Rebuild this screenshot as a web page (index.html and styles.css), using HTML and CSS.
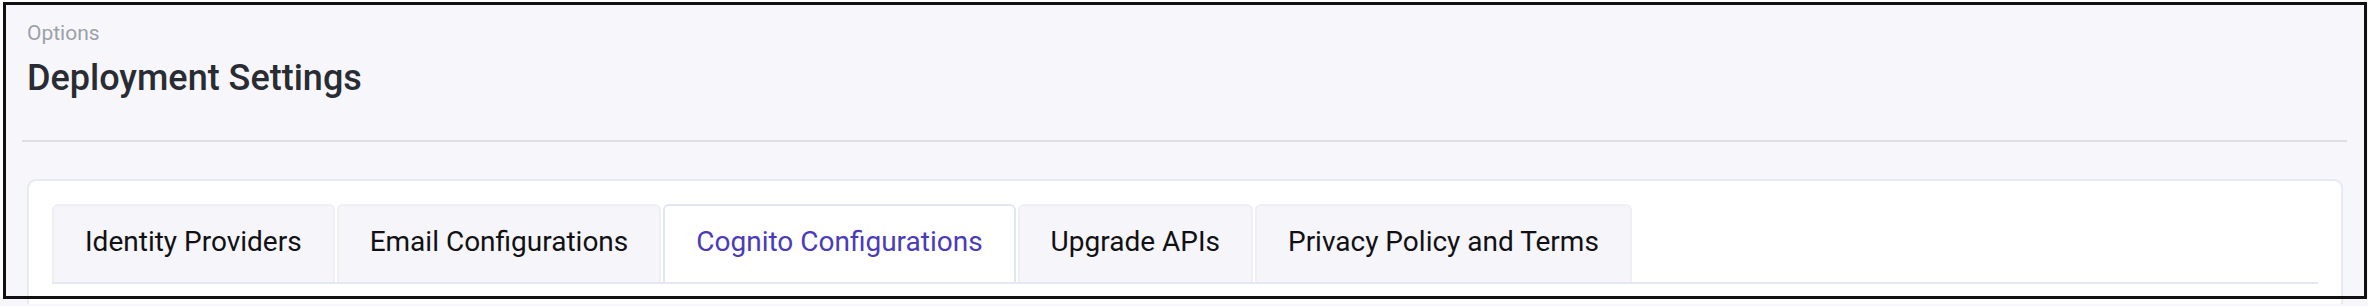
FILE: index.html
```html
<!DOCTYPE html>
<html lang="en">
<head>
<meta charset="utf-8">
<title>Deployment Settings</title>
<link rel="stylesheet" href="styles.css">
</head>
<body>
<div class="page">
  <header class="header">
    <div class="crumb">Options</div>
    <h1 class="title">Deployment Settings</h1>
  </header>
  <div class="divider"></div>
  <section class="card">
    <nav class="tabs">
      <div class="tab">Identity Providers</div>
      <div class="tab">Email Configurations</div>
      <div class="tab active">Cognito Configurations</div>
      <div class="tab">Upgrade APIs</div>
      <div class="tab">Privacy Policy and Terms</div>
    </nav>
  </section>
</div>
<div class="frame"></div>
</body>
</html>
```

FILE: styles.css
```css
html, body {
  margin: 0;
  padding: 0;
}
body {
  background: #f7f7fb;
  font-family: Roboto, "Liberation Sans", Arial, sans-serif;
  width: 2368px;
  height: 306px;
  overflow: hidden;
  position: relative;
}
.page {
  padding-top: 21px;
}
.header {
  padding: 0 27px;
}
.crumb {
  font-size: 21px;
  line-height: 24px;
  color: #9e9fa8;
}
.title {
  margin: 11px 0 0;
  font-size: 36px;
  line-height: 44px;
  font-weight: 500;
  color: #2a2c33;
}
.divider {
  margin: 40px 21px 0 22px;
  height: 2px;
  background: #dedee3;
}
.card {
  margin: 37px 25px 0 27px;
  background: #ffffff;
  border: 2px solid #e6eaf3;
  border-bottom: none;
  border-radius: 9px 9px 0 0;
  padding: 23px 23px 20px;
}
.tabs {
  display: flex;
  gap: 2px;
  border-bottom: 2px solid #e4e8f2;
}
.tab {
  box-sizing: border-box;
  height: 78px;
  padding: 20px 31px 0;
  font-size: 28px;
  line-height: 32px;
  color: #111114;
  background: #f5f5fa;
  border: 2px solid #eef0f6;
  border-bottom: none;
  border-radius: 6px 6px 0 0;
  white-space: nowrap;
}
.tab.active {
  background: #ffffff;
  border-color: #e1e6f2;
  color: #4a3bbb;
}
.frame {
  position: absolute;
  left: 3px;
  top: 2px;
  width: 2364px;
  height: 297px;
  box-sizing: border-box;
  border: 3px solid #111111;
  box-shadow: -3px -2px 0 0 #ffffff;
  pointer-events: none;
}
```
